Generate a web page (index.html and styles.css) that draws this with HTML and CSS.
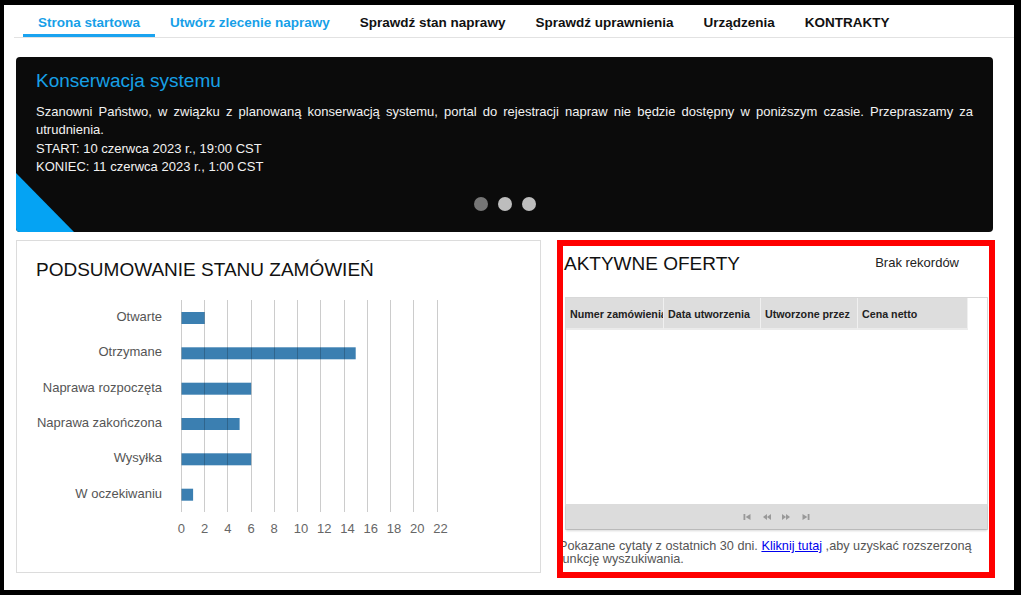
FILE: index.html
```html
<!DOCTYPE html>
<html lang="pl">
<head>
<meta charset="utf-8">
<title>Strona startowa</title>
<link rel="stylesheet" href="styles.css">
</head>
<body>
<div class="frame">
  <nav class="tabs">
    <a class="tab tab-active tab-blue" href="#">Strona startowa</a>
    <a class="tab tab-blue" href="#">Utwórz zlecenie naprawy</a>
    <a class="tab" href="#">Sprawdź stan naprawy</a>
    <a class="tab" href="#">Sprawdź uprawnienia</a>
    <a class="tab" href="#">Urządzenia</a>
    <a class="tab" href="#">KONTRAKTY</a>
  </nav>
  <main class="content">
    <section class="banner">
      <h2 class="banner-title">Konserwacja systemu</h2>
      <p class="banner-text">Szanowni Państwo, w związku z planowaną konserwacją systemu, portal do rejestracji napraw nie będzie dostępny w poniższym czasie. Przepraszamy za utrudnienia.<br>START: 10 czerwca 2023 r., 19:00 CST<br>KONIEC: 11 czerwca 2023 r., 1:00 CST</p>
      <div class="dots"><span class="dot dot-on"></span><span class="dot"></span><span class="dot"></span></div>
    </section>
    <div class="panels">
      <section class="panel summary">
        <h3 class="panel-title">PODSUMOWANIE STANU ZAMÓWIEŃ</h3>
        <svg class="chart" viewBox="0 0 480 245" width="480" height="245">
          <g class="chart-bars">
            <rect class="chart-bar" x="145.5" y="17" width="23.2" height="12"/>
            <rect class="chart-bar" x="145.5" y="52.3" width="174.2" height="12"/>
            <rect class="chart-bar" x="145.5" y="87.7" width="69.7" height="12"/>
            <rect class="chart-bar" x="145.5" y="123" width="58.1" height="12"/>
            <rect class="chart-bar" x="145.5" y="158.3" width="69.7" height="12"/>
            <rect class="chart-bar" x="145.5" y="193.7" width="11.6" height="12"/>
          </g>
          <g class="chart-grid">
            <line x1="145.5" y1="5" x2="145.5" y2="217"/>
            <line x1="168.5" y1="5" x2="168.5" y2="217"/>
            <line x1="191.5" y1="5" x2="191.5" y2="217"/>
            <line x1="215.5" y1="5" x2="215.5" y2="217"/>
            <line x1="238.5" y1="5" x2="238.5" y2="217"/>
            <line x1="261.5" y1="5" x2="261.5" y2="217"/>
            <line x1="284.5" y1="5" x2="284.5" y2="217"/>
            <line x1="308.5" y1="5" x2="308.5" y2="217"/>
            <line x1="331.5" y1="5" x2="331.5" y2="217"/>
            <line x1="354.5" y1="5" x2="354.5" y2="217"/>
            <line x1="377.5" y1="5" x2="377.5" y2="217"/>
            <line x1="401.5" y1="5" x2="401.5" y2="217"/>
          </g>
          <g class="chart-labels">
            <text x="126" y="26">Otwarte</text>
            <text x="126" y="61.3">Otrzymane</text>
            <text x="126" y="96.7">Naprawa rozpoczęta</text>
            <text x="126" y="132">Naprawa zakończona</text>
            <text x="126" y="167.3">Wysyłka</text>
            <text x="126" y="202.7">W oczekiwaniu</text>
          </g>
          <g class="chart-ticks">
            <text x="141.7" y="237.7">0</text>
            <text x="164.9" y="237.7">2</text>
            <text x="188.2" y="237.7">4</text>
            <text x="211.4" y="237.7">6</text>
            <text x="234.6" y="237.7">8</text>
            <text x="257.8" y="237.7">10</text>
            <text x="281.1" y="237.7">12</text>
            <text x="304.3" y="237.7">14</text>
            <text x="327.5" y="237.7">16</text>
            <text x="350.8" y="237.7">18</text>
            <text x="374" y="237.7">20</text>
            <text x="397.2" y="237.7">22</text>
          </g>
        </svg>
      </section>
      <section class="panel offers">
        <div class="offers-head">
          <h3 class="offers-title">AKTYWNE OFERTY</h3>
          <span class="no-records">Brak rekordów</span>
        </div>
        <div class="grid">
          <div class="grid-head">
            <div class="th th-1">Numer zamówienia</div>
            <div class="th th-2">Data utworzenia</div>
            <div class="th th-3">Utworzone przez</div>
            <div class="th th-4">Cena netto</div>
          </div>
          <div class="grid-body"></div>
          <div class="pager">
            <svg class="pager-icon" viewBox="0 0 8 6" width="8" height="6"><rect x="0.5" y="0" width="1.8" height="6"/><polygon points="7.5,0 2.6,3 7.5,6"/></svg>
            <svg class="pager-icon" viewBox="0 0 8 6" width="8" height="6"><polygon points="4,0 0,3 4,6"/><polygon points="8,0 4,3 8,6"/></svg>
            <svg class="pager-icon" viewBox="0 0 8 6" width="8" height="6"><polygon points="0,0 4,3 0,6"/><polygon points="4,0 8,3 4,6"/></svg>
            <svg class="pager-icon" viewBox="0 0 8 6" width="8" height="6"><polygon points="0.5,0 5.4,3 0.5,6"/><rect x="5.7" y="0" width="1.8" height="6"/></svg>
          </div>
        </div>
        <p class="note">Pokazane cytaty z ostatnich 30 dni. <a class="note-link" href="#">Kliknij tutaj</a> ,aby uzyskać rozszerzoną funkcję wyszukiwania.</p>
      </section>
    </div>
  </main>
</div>
</body>
</html>
```
FILE: styles.css
```css
body {
  margin: 0;
  background: #fff;
  font-family: "Liberation Sans", Arial, sans-serif;
}

.frame {
  box-sizing: border-box;
  width: 1021px;
  height: 595px;
  border-style: solid;
  border-color: #000;
  border-width: 5px 7px 5px 4px;
  overflow: hidden;
}

/* Navigation tabs */
.tabs {
  display: flex;
  margin-left: 10px;
  padding-left: 9px;
  border-bottom: 1px solid #e2e2e2;
}

.tab {
  padding: 10px 15px 4px;
  line-height: 15px;
  font-size: 13.5px;
  font-weight: bold;
  color: #111;
  text-decoration: none;
  border-bottom: 3px solid transparent;
  white-space: nowrap;
}

.tab-blue {
  color: #179fe8;
}

.tab-active {
  border-bottom-color: #1aa3f0;
}

/* Content */
.content {
  margin: 19px 0 0 12px;
  width: 977px;
}

.banner {
  position: relative;
  box-sizing: border-box;
  height: 175px;
  padding: 13px 20px 0;
  background: #0b0b0b;
  border-radius: 4px;
  overflow: hidden;
  display: flex;
  flex-direction: column;
  color: #f2f2f2;
}

.banner::before {
  content: "";
  position: absolute;
  left: 0;
  bottom: 0;
  width: 0;
  height: 0;
  border-bottom: 59px solid #05a3f3;
  border-right: 58px solid transparent;
}

.banner-title {
  margin: 0 0 11px;
  font-size: 19px;
  line-height: 22px;
  font-weight: normal;
  color: #17a0e6;
}

.banner-text {
  margin: 0;
  font-size: 13px;
  line-height: 18.4px;
  text-align: justify;
}

.dots {
  margin-top: auto;
  margin-bottom: 21.5px;
  display: flex;
  justify-content: center;
  gap: 10px;
}

.dot {
  width: 14px;
  height: 14px;
  border-radius: 50%;
  background: #bdbdbd;
}

.dot-on {
  background: #767676;
}

/* Panels */
.panels {
  display: grid;
  grid-template-columns: 525px 436px;
  gap: 16px;
  margin-top: 8px;
  height: 333px;
}

.panel {
  box-sizing: border-box;
}

.summary {
  border: 1px solid #dcdcdc;
  padding: 18px 0 0 19px;
}

.panel-title {
  margin: 0;
  font-size: 19px;
  line-height: 22px;
  font-weight: normal;
  color: #111;
}

.chart {
  display: block;
  margin-top: 14px;
}

.chart-bar {
  fill: #3b7fb1;
}

.chart-grid line {
  stroke: rgba(0, 0, 0, 0.2);
  stroke-width: 1;
}

.chart-labels text {
  font-size: 13px;
  fill: #555;
  text-anchor: end;
}

.chart-ticks text {
  font-size: 13px;
  fill: #666;
}

/* Offers panel */
.offers {
  position: relative;
  padding-top: 13px;
}

.offers::after {
  content: "";
  position: absolute;
  top: 0;
  left: 0;
  right: -2px;
  bottom: -5px;
  border: 6px solid #ff0000;
  pointer-events: none;
}

.offers-head {
  display: flex;
  justify-content: space-between;
  align-items: flex-start;
}

.offers-title {
  margin: 0 0 0 7px;
  font-size: 19px;
  line-height: 22px;
  font-weight: normal;
  color: #111;
}

.no-records {
  margin: 1.5px 34px 0 0;
  font-size: 13px;
  line-height: 15px;
  color: #222;
}

.grid {
  box-sizing: border-box;
  margin: 22px 0 0 8px;
  width: 423px;
  height: 233px;
  border: 1px solid #d8d8d8;
  display: flex;
  flex-direction: column;
}

.grid-head {
  display: flex;
  height: 32px;
}

.th {
  box-sizing: border-box;
  height: 32px;
  padding: 1px 0 0 4px;
  line-height: 30px;
  font-size: 10.7px;
  font-weight: bold;
  color: #222;
  background: #dddddd;
  border-right: 1px solid #f0f0f0;
  border-bottom: 2px solid #ebebeb;
  white-space: nowrap;
  overflow: hidden;
}

.th-1 { width: 98px; }
.th-2 { width: 97px; }
.th-3 { width: 97px; }
.th-4 { width: 110px; }

.grid-body {
  flex: 1;
}

.pager {
  height: 25px;
  background: #dcdcdc;
  box-shadow: 0 2px 2px rgba(0, 0, 0, 0.15);
  display: flex;
  justify-content: center;
  align-items: center;
  gap: 11.5px;
}

.pager-icon {
  display: block;
  fill: #999;
}

.note {
  margin: 10px 0 0 2px;
  font-size: 12.7px;
  line-height: 13px;
  color: #555;
}

.note-link {
  color: #0000ee;
  text-decoration: underline;
}
```
